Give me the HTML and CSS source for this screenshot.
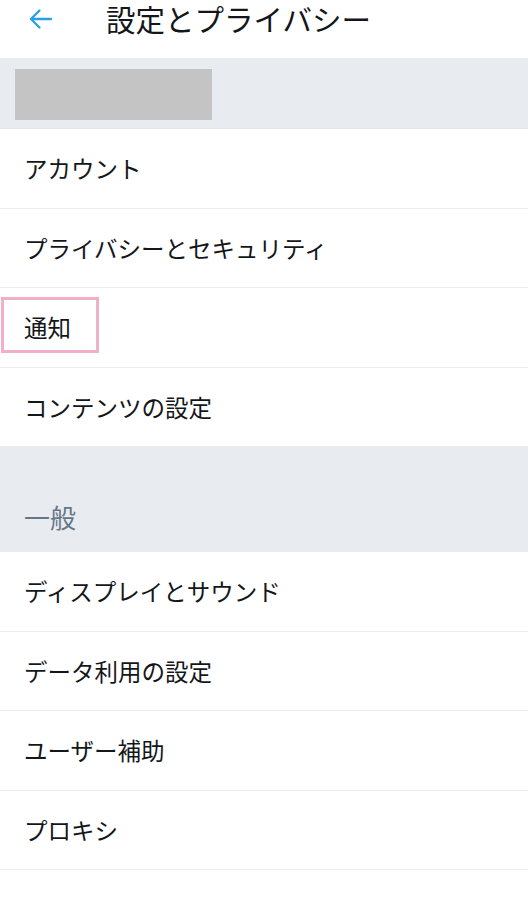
FILE: index.html
```html
<!DOCTYPE html>
<html lang="ja">
<head>
<meta charset="utf-8">
<title>設定とプライバシー</title>
<link rel="stylesheet" href="styles.css">
</head>
<body>
<div class="header">
<span class="back"><svg width="25" height="22" viewBox="0 0 25 22"><path d="M23 11H3M11.5 2.5L3 11l8.5 8.5" fill="none" stroke="#2a9fe6" stroke-width="2.3" stroke-linecap="round" stroke-linejoin="round"/></svg></span>
<span class="title">設定とプライバシー</span>
</div>

<div class="account-band"><div class="masked"></div></div>

<ul class="menu">
<li class="item">アカウント</li>
<li class="item">プライバシーとセキュリティ</li>
<li class="item"><span class="marked">通知</span></li>
<li class="item">コンテンツの設定</li>
</ul>

<div class="section-title">一般</div>

<ul class="menu">
<li class="item">ディスプレイとサウンド</li>
<li class="item">データ利用の設定</li>
<li class="item">ユーザー補助</li>
<li class="item">プロキシ</li>
</ul>
</body>
</html>
```

FILE: styles.css
```css
/* Settings screen */

body
{ margin: 0;
background: #fff;
font-family: "Noto Sans CJK JP", "Noto Sans", sans-serif;
color: #14171a;
}

.header
{ height: 58px;
display: flex;
align-items: flex-start;
}

.back
{ width: 28px;
margin-left: 28px;
padding-top: 8px;
}

.title
{ margin-left: 50px;
padding-top: 2px;
font-size: 29.5px;
line-height: 32px;
}

.account-band
{ background: #e8ebf0;
border-bottom: 1px solid #e1e5ea;
padding-top: 11px;
box-sizing: border-box;
height: 71px;
}

.masked
{ width: 197px;
height: 51px;
margin-left: 15px;
background: #c4c4c4;
}

.menu
{ list-style: none;
margin: 0;
padding: 0;
}

.item
{ height: 78.5px;
border-bottom: 1px solid #ebedf0;
display: flex;
align-items: center;
padding-left: 24px;
font-size: 23.5px;
position: relative;
}

.marked::before
{ content: "";
position: absolute;
left: 1px;
top: 9px;
width: 92px;
height: 50px;
border: 3px solid #f2afc9;
}

.section-title
{ height: 106px;
background: #e8ebf0;
box-sizing: border-box;
padding: 54px 0 0 24px;
font-size: 26px;
line-height: 34px;
color: #657786;
margin-top: -1px;
}
```
